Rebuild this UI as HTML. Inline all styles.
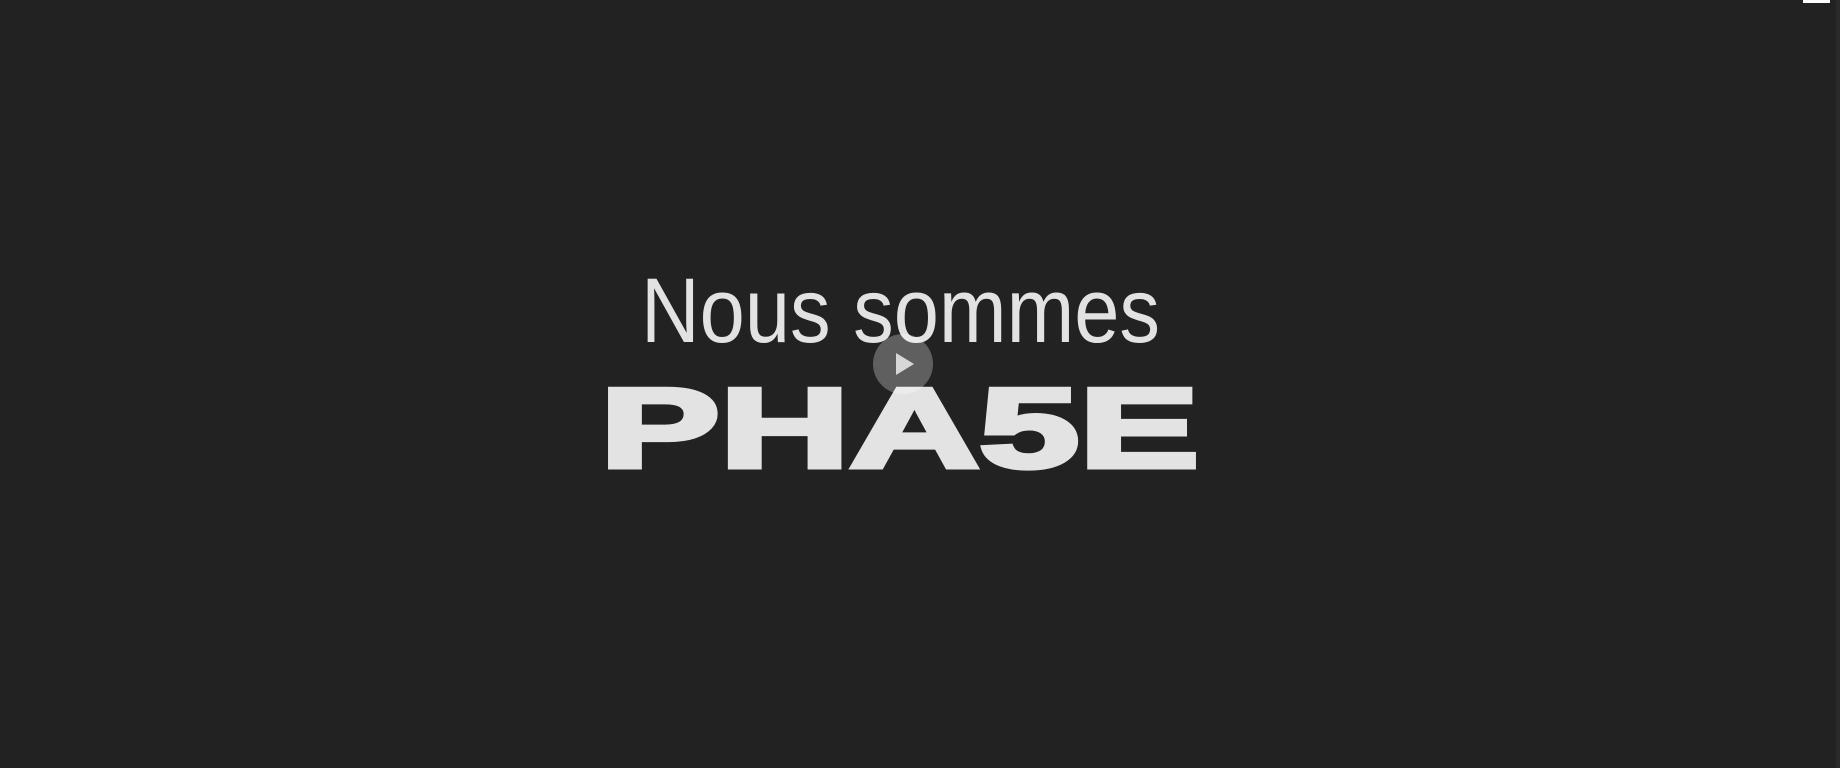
<!DOCTYPE html>
<html><head><meta charset="utf-8"><style>
html,body{margin:0;padding:0;width:1840px;height:768px;overflow:hidden;background:#222;}
</style></head><body>
<svg width="1840" height="768" xmlns="http://www.w3.org/2000/svg" style="position:absolute;left:0;top:0">
<rect width="1840" height="768" fill="#222"/>
<rect x="1836" y="0" width="4" height="768" fill="#2a2a2a"/>
<rect x="1803" y="0" width="27" height="3" fill="#fff"/>
<text x="641" y="342" font-family="Liberation Sans, sans-serif" font-size="92" fill="#e2e2e2" textLength="519" lengthAdjust="spacingAndGlyphs">Nous sommes</text>
<text x="600" y="467" font-family="Liberation Sans, sans-serif" font-weight="bold" font-size="113" fill="#e3e3e3" stroke="#e3e3e3" stroke-width="5" stroke-linejoin="miter" textLength="599" lengthAdjust="spacingAndGlyphs">PHA5E</text>
<circle cx="903" cy="364" r="30" fill="rgba(255,255,255,0.28)"/>
<path d="M896 353 L914 364 L896 375 Z" fill="rgba(255,255,255,0.75)"/>
</svg>
</body></html>
